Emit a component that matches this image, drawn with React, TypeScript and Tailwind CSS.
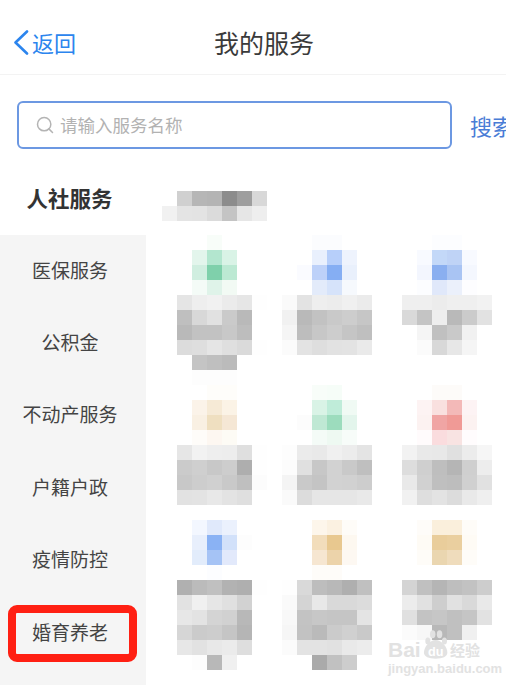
import { Search } from "lucide-react";

const font = { fontFamily: '"Noto Sans CJK SC", "Noto Sans", sans-serif' };

const menu = ["医保服务", "公积金", "不动产服务", "户籍户政", "疫情防控", "婚育养老"];

// pixelated placeholders: "." is white, 2 chars is a grey level, 6 chars is a full colour
const tiles: string[][] = [
  [
    ". . f8fdf9 . . .",
    ". e3f5ec b3e6cf d9f3e6 . .",
    ". d0eee0 7fd0ab bce9d3 . .",
    ". f4fbf7 dff3e9 f2faf4 . .",
    "e5 ee f1 eb e6 fe",
    "bf d8 e1 ca b9 .",
    "b9 c2 c2 c8 bd .",
    "dc de e5 df da fe",
    ". c4 bf bb . .",
    ". fd fd fd . .",
  ],
  [
    ". . fbfcfe fbfcfe . .",
    ". . e9f0fd b7cffa eef3fd .",
    ". fafbff bdd1f9 85aef3 e9f0fc .",
    ". . e3ebfa d6e3fa f6f9fd .",
    "fa e3 ee ec f0 eb",
    "f1 b9 c2 c9 cd c6",
    "f5 bd c7 cd c5 bf",
    "fb e3 de e2 e3 ea",
  ],
  [
    ". . fcfdff fcfdff . .",
    ". f8faff c3d8f8 bfd3f6 f8faff .",
    ". f3f6fe 8aaff0 a9c4f3 f4f7fe .",
    ". fcfdff e0e8fa ebf0fb fdfdff .",
    "ef ef ec ef ef f2",
    "d9 c4 ee b9 cb e2",
    ". f5 c0 c9 f1 .",
    ". fb d8 e7 f5 .",
  ],
  [
    ". . fefdfa fefdfa . .",
    ". fbf3e9 f6ead6 fbf3e6 . .",
    ". f9f0e3 efdfc0 f5e7d5 . .",
    ". fefcf9 fdf7f1 fdfbf5 . .",
    "e6 f2 ee ed df fe",
    "cb cf c8 cd ae fe",
    "c8 cd d0 c9 bf fc",
    "e2 e3 e8 e3 df .",
  ],
  [
    ". . f8fdf9 f6fdf8 . .",
    ". . d9f3e6 bfecd9 f0faf4 .",
    ". fc bfe8d4 9cdcbd e3f5ec .",
    ". . f4fbf7 eef9f2 f7fcf9 .",
    "fd eb e9 f0 ec e4",
    "fc e0 c7 d2 c9 bf",
    "f4 c9 c4 d2 d1 cd",
    "fa dc e6 e6 e6 e9",
  ],
  [
    ". . fdfbf9 fdfbf9 . .",
    ". fdf3f3 f9e0df f3b9b8 fdf3f4 .",
    ". fcf2f1 f0a5a4 f09a96 fcf2f1 .",
    ". fffbfc fadcde f8e3e2 fffcfd .",
    "f2 e9 e8 e0 ec f6",
    "dd cf be b5 cf ed",
    "e9 d1 bf bd d0 e1",
    "f1 de e3 dc e9 ef",
  ],
  [
    ". f3f7ff e0e9fb ebf1fd . .",
    ". e8effc 8ab2f4 d2e1fa fd .",
    ". e2ecfb a5c3f5 e2e9fb . .",
    ". . fcfdff . . .",
    "b0 bb c0 b2 af fe",
    "e2 f0 e6 e0 d2 .",
    "e7 e3 d4 d1 b8 .",
    "d6 cb cd c5 b5 .",
    "e7 e2 e8 eb de .",
    ". fd b8 f0 . .",
  ],
  [
    ". . fdf6eb fbf1e1 fefcf8 .",
    ". . f2ddbb e8c88f fdf8f0 .",
    ". . f6e6d1 ecd3aa fdf8f2 .",
    ". . fefcf9 fefcf9 . .",
    "fe d9 bd b8 af c0",
    "fa d4 e8 d9 d9 dc",
    "f8 c3 c7 c5 c5 e4",
    "f6 c2 ba cb d0 c9",
    "fb e3 e3 e1 e9 ec",
    ". . aa c1 cd .",
  ],
  [
    ". fefcf9 faefdc faefdc fefcf8 .",
    ". fefbf5 e9cd9b eacf9f fefbf5 .",
    ". fefcf8 ead6b0 efdcbc fefcf8 .",
    ". . . . . .",
    "d4 c0 b5 be c2 cd",
    "ec e1 ce e1 d9 e9",
    "e0 c3 c6 c0 c5 e2",
    "fb f7 b8 c0 f0 .",
  ],
];

const titleBlur = [
  ". d0 b6 b4 8c 9e d8",
  "f1 e4 e3 db c4 e6 ee",
];

const toColor = (t: string) => {
  if (t === ".") return "#ffffff";
  if (t.length === 2) return `#${t}${t}${t}`;
  return `#${t}`;
};

const Mosaic = ({ rows }: { rows: string[] }) => (
  <div className="flex flex-col blur-[0.4px]">
    {rows.map((row, i) => (
      <div key={i} className="flex">
        {row.split(" ").map((cell, j) => (
          <div
            key={j}
            className="w-[15px] h-[15px]"
            style={{ backgroundColor: toColor(cell) }}
          />
        ))}
      </div>
    ))}
  </div>
);

const App = () => {
  return (
    <div
      className="relative w-[506px] h-[685px] overflow-hidden bg-white text-[#333]"
      style={font}
    >
      {/* header */}
      <div className="flex items-center h-[75px] pt-[10px] border-b border-[#f3f3f3]">
        <div className="flex items-center w-[215px] pl-[13px] text-[#2c85ee]">
          <svg
            width="16"
            height="25"
            viewBox="0 0 16 25"
            fill="none"
            stroke="currentColor"
            strokeWidth="2.6"
            strokeLinecap="round"
            strokeLinejoin="round"
          >
            <path d="M14 1.5 2.5 12.5 14 23.5" />
          </svg>
          <span className="ml-[3px] text-[22px] leading-none">返回</span>
        </div>
        <div className="text-[25px] leading-none mt-[1px] -ml-[1px] text-[#3a3a3a]">我的服务</div>
      </div>

      {/* search */}
      <div className="flex items-center mt-[26px] pl-[17px]">
        <div className="flex items-center w-[435px] h-[48px] shrink-0 rounded-[6px] border-2 border-[#6c98e2] pl-[16px]">
          <Search size={20} strokeWidth={1.8} className="text-[#b4b4b4]" />
          <span className="ml-[5px] text-[17.5px] leading-none text-[#b2b2b2]">
            请输入服务名称
          </span>
        </div>
        <span className="ml-[18px] text-[22px] leading-none text-[#4a7dd6] whitespace-nowrap">
          搜索
        </span>
      </div>

      <div className="flex items-start h-[86px]">
        <div className="w-[146px] pt-[35px] pr-[7px] text-center text-[21.5px] leading-[28px] font-semibold">
          人社服务
        </div>
        <div className="ml-[16px] mt-[42px]">
          <Mosaic rows={titleBlur} />
        </div>
      </div>

      {/* body */}
      <div className="flex">
        <div className="w-[146px] h-[450px] bg-[#f5f5f5] flex flex-col">
          {menu.map((item) => (
            <div
              key={item}
              className="h-[72.4px] shrink-0 flex items-center justify-center pb-[4px] pr-[6px] text-[19px] leading-none text-[#444]"
            >
              {item}
            </div>
          ))}
        </div>
        <div className="ml-[31px] grid grid-cols-[105px_120px_90px] grid-rows-[150px_135px_165px]">
          {tiles.map((rows, i) => (
            <Mosaic key={i} rows={rows} />
          ))}
        </div>
      </div>

      {/* red annotation round the last menu item */}
      <div className="absolute left-[8px] top-[605px] w-[129px] h-[57px] rounded-[9px] border-[8px] border-[#ff2013]" />

      {/* watermark */}
      <div className="absolute left-[388px] top-[628px] w-[92px] text-[#e2e2e2]">
        <div className="flex items-end leading-none">
          <span
            className="text-[21px] font-bold leading-[20px]"
            style={{ fontFamily: '"Liberation Sans", sans-serif' }}
          >
            Bai
          </span>
          <svg width="30" height="32" viewBox="0 0 30 32" fill="currentColor">
            <ellipse cx="7" cy="13" rx="2.6" ry="3.6" />
            <ellipse cx="12" cy="6" rx="2.8" ry="4" />
            <ellipse cx="19" cy="6" rx="2.8" ry="4" />
            <ellipse cx="24" cy="13" rx="2.6" ry="3.6" />
            <path d="M15 12c6 0 12 7 12 13 0 4-5 6-12 6S3 29 3 25c0-6 6-13 12-13z" />
            <text
              x="15"
              y="28"
              textAnchor="middle"
              fontSize="13"
              fontWeight="700"
              fill="#ffffff"
              fontFamily="Liberation Sans, sans-serif"
            >
              du
            </text>
          </svg>
          <span className="text-[15px] font-bold leading-[20px] whitespace-nowrap">经验</span>
        </div>
        <div
          className="mt-[2px] text-[13px] leading-none font-bold whitespace-nowrap"
          style={{ fontFamily: '"Liberation Sans", sans-serif' }}
        >
          jingyan.baidu.com
        </div>
      </div>
    </div>
  );
};

export default App;
